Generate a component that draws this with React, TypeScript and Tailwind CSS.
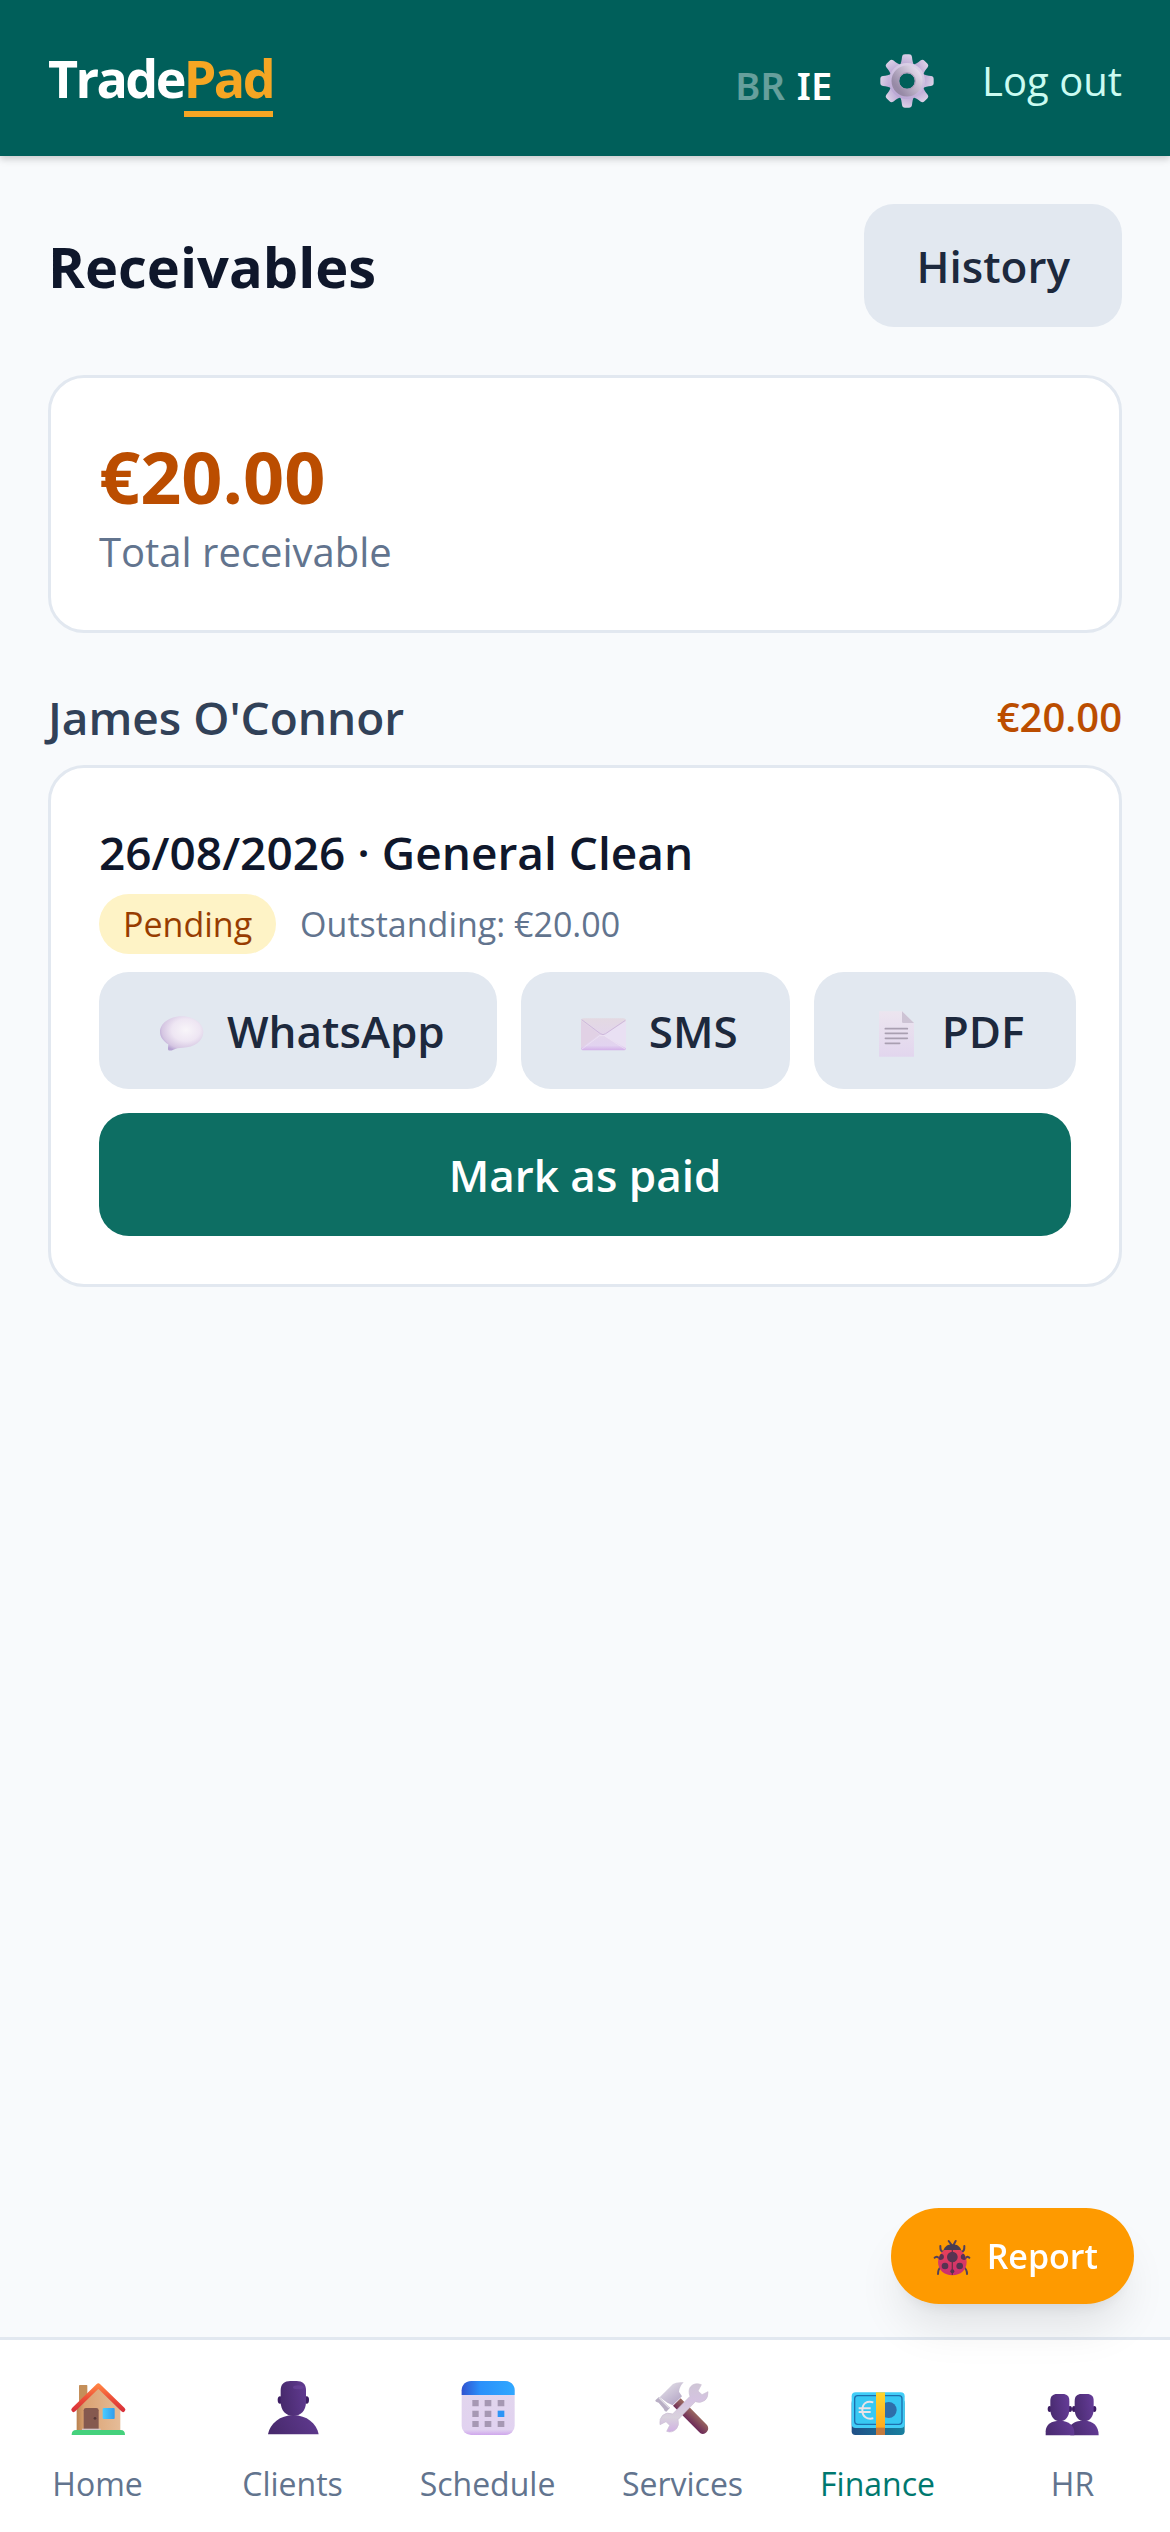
import type { ReactNode } from "react";

interface IconProps {
  className?: string;
}

interface NavItem {
  label: string;
  href: string;
  icon: ReactNode;
  active?: boolean;
}

function GearIcon({ className }: IconProps) {
  return (
    <svg className={className} viewBox="0 0 162 162" aria-hidden="true">
      <defs>
        <linearGradient id="gear-teeth" x1="0.7" y1="0" x2="0.3" y2="1">
          <stop offset="0" stopColor="#ddd3e8" />
          <stop offset="1" stopColor="#b9a5d3" />
        </linearGradient>
        <linearGradient id="gear-ring" x1="1" y1="0.1" x2="0.1" y2="0.8">
          <stop offset="0" stopColor="#e2d9ea" />
          <stop offset="1" stopColor="#978aa6" />
        </linearGradient>
      </defs>
      <g fill="url(#gear-teeth)">
        {[0, 45, 90, 135, 180, 225, 270, 315].map((angle) => (
          <path key={angle} transform={`rotate(${angle} 81 81)`} d="M58 36C64 28 65 18 66 9C67 3 70 1 75 1H87C92 1 95 3 96 9C97 18 98 28 104 36Z" />
        ))}
        <path fillRule="evenodd" d="M81 27a54 54 0 1 1 0 108a54 54 0 1 1 0-108ZM81 54a27 27 0 1 0 0 54a27 27 0 1 0 0-54Z" />
      </g>
      <circle cx="81" cy="81" r="35" fill="none" stroke="url(#gear-ring)" strokeWidth="23" />
      <circle cx="81" cy="81" r="25" fill="none" stroke="#a99ab8" strokeWidth="3" />
    </svg>
  );
}

function SpeechIcon({ className }: IconProps) {
  return (
    <svg className={className} viewBox="0 0 180 180" aria-hidden="true">
      <defs>
        <radialGradient id="speech" cx="0.6" cy="0.4" r="0.65">
          <stop offset="0" stopColor="#f8f5f9" />
          <stop offset="0.5" stopColor="#eee6f3" />
          <stop offset="0.85" stopColor="#d5c6e2" />
          <stop offset="1" stopColor="#b5a2d2" />
        </radialGradient>
      </defs>
      <path fill="url(#speech)" d="M92 46C129 46 157 68 157 93C157 120 129 140 96 140C82 140 75 142 67 146C58 151 50 149 51 143L52 130C37 121 27 107 27 93C27 68 55 46 92 46Z" />
    </svg>
  );
}

function EnvelopeIcon({ className }: IconProps) {
  return (
    <svg className={className} viewBox="0 0 180 180" aria-hidden="true">
      <defs>
        <linearGradient id="envelope" x1="0" y1="0" x2="0" y2="1">
          <stop offset="0" stopColor="#e3d9e2" />
          <stop offset="0.85" stopColor="#e2d3f0" />
          <stop offset="1" stopColor="#d2afe9" />
        </linearGradient>
      </defs>
      <rect x="24" y="52" width="135" height="96" rx="8" fill="url(#envelope)" />
      <path d="M24 60L80 100L24 142Z" fill="#e1d1e5" />
      <path d="M159 60L90 102L159 142Z" fill="#e9e0f3" />
      <path d="M27 144L80 104H94L156 144" fill="none" stroke="#f0e5f5" strokeWidth="2" />
      <path d="M26 56L82 98Q90 104 98 98L157 58" fill="none" stroke="#ceb8dc" strokeWidth="3" />
    </svg>
  );
}

function DocumentIcon({ className }: IconProps) {
  return (
    <svg className={className} viewBox="0 0 180 180" aria-hidden="true">
      <defs>
        <linearGradient id="document" x1="0" y1="0" x2="0" y2="1">
          <stop offset="0" stopColor="#ece5ef" />
          <stop offset="1" stopColor="#e2d6ee" />
        </linearGradient>
      </defs>
      <path d="M39 31H108L144 66V167H39Z" fill="url(#document)" />
      <path d="M108 31L144 66H112Q108 66 108 62Z" fill="#cdc3d4" />
      <path d="M58 83H124M58 97H124M58 112H124M58 127H101" stroke="#a99fb1" strokeWidth="5" strokeLinecap="round" />
    </svg>
  );
}

function LadybugIcon({ className }: IconProps) {
  return (
    <svg className={className} viewBox="0 0 144 144" aria-hidden="true">
      <defs>
        <linearGradient id="bug-shell" x1="0" y1="0" x2="0" y2="1">
          <stop offset="0" stopColor="#e6415a" />
          <stop offset="1" stopColor="#c92f72" />
        </linearGradient>
      </defs>
      <g fill="none" stroke="#51405a" strokeWidth="6" strokeLinecap="round">
        <path d="M73 38L65 27M80 38L86 27" />
        <path d="M50 60C40 58 40 52 40 42M102 60C112 58 112 52 112 42" />
        <path d="M38 80C30 72 28 74 23 77M114 80C122 72 122 74 127 77" />
        <path d="M42 105C34 110 33 116 33 126M110 105C118 110 120 116 120 126" />
      </g>
      <path d="M49 56C53 43 63 37 76 37C90 37 99 43 103 56L95 64H57Z" fill="#493d50" />
      <path d="M52 54H100C113 65 119 77 119 90C119 114 100 130 76 130C52 130 33 114 33 90C33 77 39 65 52 54Z" fill="url(#bug-shell)" />
      <path d="M76 54V129" stroke="#723047" strokeWidth="4" />
      <g fill="#573351">
        <circle cx="76" cy="75" r="16" />
        <circle cx="54" cy="102" r="10" />
        <circle cx="98" cy="102" r="10" />
        <path d="M41 66C50 66 52 72 50 79C47 84 40 86 35 82Q36 72 41 66Z" />
        <path d="M111 66C102 66 100 72 102 79C105 84 112 86 117 82Q116 72 111 66Z" />
        <circle cx="76" cy="118" r="6" />
      </g>
    </svg>
  );
}

function HomeIcon({ className }: IconProps) {
  return (
    <svg className={className} viewBox="0 0 180 180" aria-hidden="true">
      <defs>
        <linearGradient id="home-wall" x1="0" y1="0" x2="1" y2="0">
          <stop offset="0" stopColor="#b98350" />
          <stop offset="0.18" stopColor="#dba272" />
          <stop offset="1" stopColor="#e5bc98" />
        </linearGradient>
        <linearGradient id="home-roof" x1="0" y1="0" x2="0" y2="1">
          <stop offset="0" stopColor="#ff8142" />
          <stop offset="0.5" stopColor="#ed5139" />
          <stop offset="1" stopColor="#d9323a" />
        </linearGradient>
        <linearGradient id="home-window" x1="0" y1="0" x2="1" y2="0">
          <stop offset="0" stopColor="#4bccff" />
          <stop offset="1" stopColor="#2f9cee" />
        </linearGradient>
      </defs>
      <rect x="33" y="27" width="25" height="60" rx="2" fill="#c48f5a" />
      <path d="M26 95L91 36L157 95V163H26Z" fill="url(#home-wall)" />
      <path d="M17 101L91 29L165 101" fill="none" stroke="url(#home-roof)" strokeWidth="14" strokeLinecap="round" strokeLinejoin="round" />
      <path d="M47 161V103Q47 96 54 96H85Q92 96 92 103V161Z" fill="#85594f" />
      <circle cx="81" cy="127" r="4" fill="#553635" />
      <rect x="42" y="158" width="56" height="5" fill="#d2c7cb" />
      <rect x="104" y="96" width="36" height="33" rx="3" fill="url(#home-window)" />
      <path d="M11 177Q11 162 24 162H158Q171 162 171 177Z" fill="#45d17c" />
    </svg>
  );
}

function PersonIcon({ className }: IconProps) {
  return (
    <svg className={className} viewBox="0 0 180 180" aria-hidden="true">
      <defs>
        <linearGradient id="person" x1="0" y1="0.4" x2="1" y2="0.2">
          <stop offset="0" stopColor="#482a6d" />
          <stop offset="1" stopColor="#603a90" />
        </linearGradient>
      </defs>
      <ellipse cx="51" cy="72" rx="7" ry="11" fill="#3c1c62" />
      <ellipse cx="131" cy="72" rx="7" ry="11" fill="#3c1c62" />
      <path d="M15 175C21 142 51 118 91 118C131 118 161 142 167 175Z" fill="url(#person)" />
      <path d="M53 42C53 24 65 15 82 15H101C118 15 129 24 129 42V78C129 104 113 120 91 120C69 120 53 104 53 78Z" fill="url(#person)" />
      <ellipse cx="106" cy="34" rx="16" ry="6" fill="#6a4399" opacity="0.7" />
    </svg>
  );
}

function CalendarIcon({ className }: IconProps) {
  return (
    <svg className={className} viewBox="0 0 180 180" aria-hidden="true">
      <defs>
        <linearGradient id="calendar-top" x1="0" y1="0.5" x2="1" y2="0.5">
          <stop offset="0" stopColor="#3153cf" />
          <stop offset="0.35" stopColor="#2b90fa" />
          <stop offset="1" stopColor="#30a8ff" />
        </linearGradient>
        <linearGradient id="calendar-body" x1="0" y1="0" x2="0" y2="1">
          <stop offset="0" stopColor="#e2d6ec" />
          <stop offset="0.9" stopColor="#e1d2f0" />
          <stop offset="1" stopColor="#cfa6ec" />
        </linearGradient>
      </defs>
      <rect x="11" y="15" width="159" height="162" rx="28" fill="url(#calendar-body)" />
      <path d="M11 57V43C11 26 24 15 40 15H141C158 15 170 26 170 43V57Z" fill="url(#calendar-top)" />
      <path d="M43 72H62V91H43ZM80 72H100V91H80ZM119 72H139V91H119ZM43 104H62V123H43ZM80 104H100V123H80ZM43 135H62V153H43ZM80 135H100V153H80ZM119 135H139V153H119Z" fill="#a698b3" />
      <rect x="119" y="104" width="20" height="19" fill="#2d95f6" />
    </svg>
  );
}

function ToolsIcon({ className }: IconProps) {
  return (
    <svg className={className} viewBox="0 0 180 180" aria-hidden="true">
      <defs>
        <linearGradient id="tool-handle" gradientUnits="userSpaceOnUse" x1="122" y1="108" x2="102" y2="130">
          <stop offset="0" stopColor="#98665f" />
          <stop offset="1" stopColor="#702e59" />
        </linearGradient>
        <linearGradient id="tool-wrench" x1="0" y1="0" x2="0" y2="1">
          <stop offset="0" stopColor="#cfc6d6" />
          <stop offset="0.35" stopColor="#d5c3e1" />
          <stop offset="0.7" stopColor="#d9d2dd" />
          <stop offset="1" stopColor="#d0b0e3" />
        </linearGradient>
        <linearGradient id="tool-hammer" x1="0.2" y1="0.2" x2="0.7" y2="0.9">
          <stop offset="0" stopColor="#ddd8e3" />
          <stop offset="1" stopColor="#b7aac8" />
        </linearGradient>
      </defs>
      <path d="M60 89L83 67L162 147C171 158 162 174 149 174Q143 174 139 169Z" fill="url(#tool-handle)" />
      <path d="M20 64L60 24Q70 17 92 19Q80 30 78 47L87 61L59 88L43 80Z" fill="url(#tool-hammer)" />
      <path d="M7 73L18 63L51 95L40 107Q34 106 32 98L17 80Q7 79 7 73Z" fill="#b9afc5" />
      <path d="M18 65L48 95" stroke="#e1dce5" strokeWidth="4" />
      <path d="M145 26Q125 18 112 33Q105 44 111 61L59 114Q41 107 29 118Q18 129 21 146L39 137L50 148L41 166Q57 172 70 159Q80 147 75 131L127 77Q143 83 156 73Q166 64 165 47L147 56L135 45Z" fill="url(#tool-wrench)" stroke="#cbc0d3" strokeWidth="2" strokeLinejoin="round" />
    </svg>
  );
}

function MoneyIcon({ className }: IconProps) {
  return (
    <svg className={className} viewBox="0 0 180 180" aria-hidden="true">
      <defs>
        <linearGradient id="money-edge" x1="0" y1="0" x2="1" y2="0">
          <stop offset="0" stopColor="#204f86" />
          <stop offset="1" stopColor="#18809f" />
        </linearGradient>
        <linearGradient id="money-band" x1="0" y1="0" x2="0" y2="1">
          <stop offset="0" stopColor="#ffd52b" />
          <stop offset="1" stopColor="#ffaa20" />
        </linearGradient>
      </defs>
      <rect x="11" y="70" width="159" height="107" rx="11" fill="url(#money-edge)" />
      <rect x="11" y="49" width="159" height="107" rx="12" fill="#41cdf7" />
      <rect x="20" y="59" width="142" height="86" rx="9" fill="#37c8f3" stroke="#1e6fae" strokeWidth="4" />
      <circle cx="122" cy="102" r="24" fill="#2e6eaa" />
      <path d="M76 79C56 73 43 83 43 102C43 123 57 131 76 127M32 97H68M32 108H68" fill="none" stroke="#e9e3e8" strokeWidth="6" />
      <rect x="84" y="49" width="27" height="107" fill="url(#money-band)" />
      <rect x="84" y="155" width="27" height="22" fill="#c47a3e" />
    </svg>
  );
}

function PeopleIcon({ className }: IconProps) {
  return (
    <svg className={className} viewBox="0 0 180 180" aria-hidden="true">
      <defs>
        <linearGradient id="people" x1="0" y1="0.3" x2="1" y2="0.1">
          <stop offset="0" stopColor="#4b2c72" />
          <stop offset="1" stopColor="#653c98" />
        </linearGradient>
      </defs>
      {[0, 73].map((x) => (
        <g key={x} transform={`translate(${x} 0)`}>
          <ellipse cx="20" cy="99" rx="6" ry="9" fill="#3c1c62" />
          <ellipse cx="81" cy="99" rx="6" ry="9" fill="#3c1c62" />
          <path d="M22 75C22 60 30 54 42 54H59C72 54 79 60 79 75V100C79 122 67 136 51 136C34 136 22 122 22 100Z" fill="url(#people)" />
        </g>
      ))}
      <path d="M82 178V150C91 137 105 134 124 134C151 134 167 150 167 178Z" fill="url(#people)" />
      <path d="M8 178V166C8 146 25 134 51 134C78 134 94 149 94 170V178Z" fill="url(#people)" />
    </svg>
  );
}

const navItems: NavItem[] = [
  { label: "Home", href: "#home", icon: <HomeIcon className="size-[60px]" /> },
  { label: "Clients", href: "#clients", icon: <PersonIcon className="size-[60px]" /> },
  { label: "Schedule", href: "#schedule", icon: <CalendarIcon className="size-[60px]" /> },
  { label: "Services", href: "#services", icon: <ToolsIcon className="size-[60px]" /> },
  { label: "Finance", href: "#finance", icon: <MoneyIcon className="size-[60px]" />, active: true },
  { label: "HR", href: "#hr", icon: <PeopleIcon className="size-[60px]" /> },
];

const shareActions = [
  { label: "WhatsApp", icon: <SpeechIcon className="size-[60px]" /> },
  { label: "SMS", icon: <EnvelopeIcon className="size-[60px]" /> },
  { label: "PDF", icon: <DocumentIcon className="size-[60px]" /> },
];

export default function App() {
  return (
    <div className="flex min-h-screen flex-col bg-slate-50 font-['Open_Sans','Noto_Sans',sans-serif] text-slate-900">
      {/* Header */}
      <header className="flex h-[156px] items-center justify-between bg-teal-800 px-12 pt-1.5 shadow-[0_3px_9px_rgba(0,0,0,0.1),0_3px_6px_rgba(0,0,0,0.1)]">
        <a href="#home" className="flex text-[52px] leading-[66px] font-bold tracking-tighter text-white">
          Trade
          <span className="border-b-6 border-[#f5a623] text-[#f5a623]">Pad</span>
        </a>
        <div className="flex items-center gap-12">
          <div className="flex gap-3 pt-2 font-['Noto_Sans',sans-serif] text-[38px] leading-[48px] font-semibold text-white">
            <button type="button" className="opacity-40">BR</button>
            <button type="button">IE</button>
          </div>
          <button type="button" aria-label="Settings">
            <GearIcon className="size-[54px]" />
          </button>
          <button type="button" className="text-[40px] leading-[60px] text-teal-100">Log out</button>
        </div>
      </header>

      {/* Content */}
      <main className="flex flex-1 flex-col gap-12 p-12">
        <div className="flex items-center justify-between">
          <h1 className="text-[56px] leading-[84px] font-bold">Receivables</h1>
          <button type="button" className="h-[123px] rounded-[30px] bg-slate-200 px-[52px] text-[44px] leading-[72px] font-semibold text-slate-800">
            History
          </button>
        </div>

        <section className="rounded-[36px] border-3 border-slate-200 bg-white p-12">
          <p className="pt-1 text-[72px] leading-[92px] font-bold text-amber-700">€20.00</p>
          <p className="text-[40px] leading-[60px] text-slate-500">Total receivable</p>
        </section>

        <section className="flex flex-col gap-3">
          <div className="flex items-center justify-between">
            <h2 className="text-[46px] leading-[72px] font-semibold text-slate-700">James O'Connor</h2>
            <span className="text-[40px] leading-[60px] font-semibold text-amber-700">€20.00</span>
          </div>

          <article className="rounded-[36px] border-3 border-slate-200 bg-white p-12">
            <h3 className="text-[46px] leading-[72px] font-semibold">26/08/2026 · General Clean</h3>
            <div className="mt-1.5 flex items-center gap-6 text-[34px] leading-[48px]">
              <span className="rounded-full bg-amber-100 px-6 py-1.5 text-amber-800">Pending</span>
              <span className="text-slate-500">Outstanding: €20.00</span>
            </div>
            <div className="mt-[18px] flex gap-6">
              {shareActions.map((action) => (
                <button
                  key={action.label}
                  type="button"
                  className="flex h-[117px] shrink-0 items-center gap-4 rounded-[30px] bg-slate-200 px-[52px] text-[44px] leading-[72px] font-semibold text-slate-800"
                >
                  {action.icon}
                  {action.label}
                </button>
              ))}
            </div>
            <button type="button" className="mt-6 h-[123px] w-full rounded-[30px] bg-[#0d6e63] text-[44px] leading-[72px] font-semibold text-white">
              Mark as paid
            </button>
          </article>
        </section>
      </main>

      {/* Bottom navigation */}
      <nav className="sticky bottom-0 grid grid-cols-6 border-t-3 border-slate-200 bg-white py-6">
        {navItems.map((item) => (
          <a
            key={item.label}
            href={item.href}
            aria-current={item.active ? "page" : undefined}
            className={`flex flex-col items-center gap-3 text-[32px] leading-[48px] ${item.active ? "text-teal-700" : "text-slate-500"}`}
          >
            <span className="flex h-[84px] items-center">{item.icon}</span>
            {item.label}
          </a>
        ))}
      </nav>

      {/* Floating report button */}
      <button
        type="button"
        className="fixed right-9 bottom-[228px] flex h-24 items-center gap-3 rounded-full bg-amber-500 px-9 text-[34px] leading-[48px] font-semibold text-white shadow-[0_30px_45px_-9px_rgba(0,0,0,0.1),0_12px_18px_-12px_rgba(0,0,0,0.1)]"
      >
        <LadybugIcon className="size-12" />
        Report
      </button>
    </div>
  );
}
